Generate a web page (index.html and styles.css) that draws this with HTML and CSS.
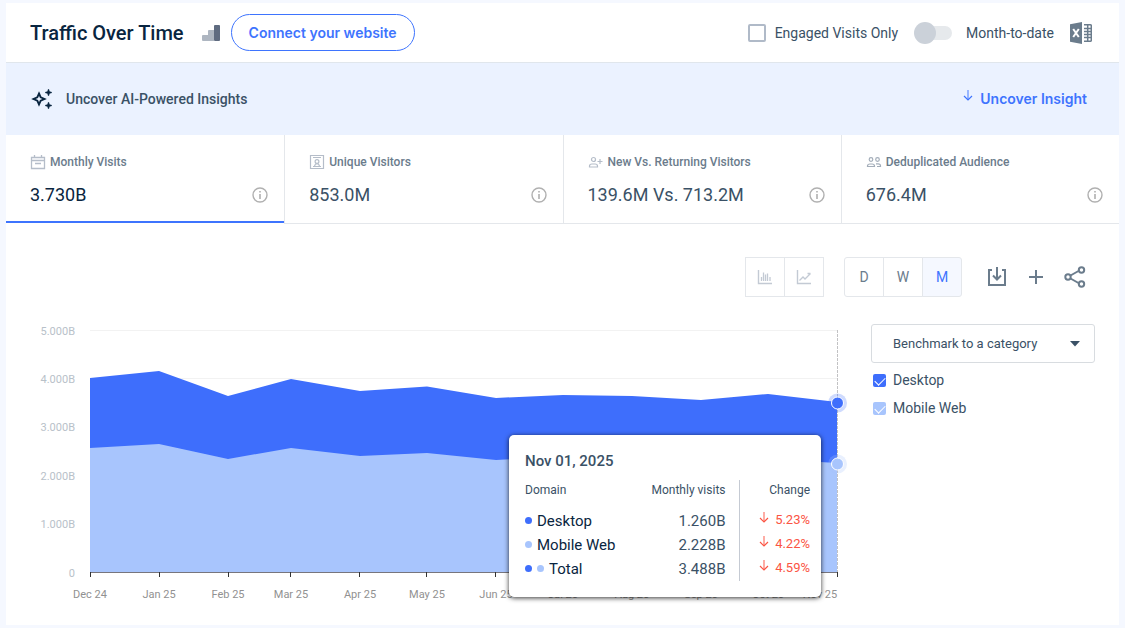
FILE: index.html
```
<!DOCTYPE html>
<html lang="en">
<head>
  <meta charset="UTF-8" />
  <title>Traffic Over Time</title>
  <meta name="viewport" content="width=device-width, initial-scale=1.0" />
  <link rel="stylesheet" href="styles.css">
</head>
<body>
  <svg class="defs" aria-hidden="true">
    <symbol id="info" viewBox="0 0 16 16">
      <circle cx="8" cy="8" r="7" fill="none" stroke="#b0b0b0" stroke-width="1.4" />
      <path d="M7.2 4h1.6v1.6H7.2zM7.2 7h1.6v5H7.2z" fill="#b0b0b0" />
    </symbol>
    <symbol id="down" viewBox="0 0 10 12">
      <path d="M5 0v9" fill="none" stroke="currentColor" stroke-width="1.6" opacity=".6" />
      <path d="M1 6l4 4 4-4" fill="none" stroke="currentColor" stroke-width="1.2" />
    </symbol>
  </svg>

  <main class="card">
    <header class="header">
      <h1>Traffic Over Time</h1>
      <svg class="bars-icon" width="18" height="16" viewBox="0 0 18 16">
        <path d="M1 10h5V6q0-1 1-1h5v11H1q-1 0-1-1v-4q0-1 1-1z" fill="#aeb6c1" />
        <rect x="12" width="6" height="16" rx="1" fill="#5f6b80" />
      </svg>
      <button class="connect">Connect your website</button>

      <div class="options">
        <label class="engaged"><input type="checkbox" />Engaged Visits Only</label>
        <label class="mtd"><input type="checkbox" role="switch" />Month-to-date</label>
        <button class="excel" aria-label="Download Excel">
          <svg width="22" height="22" viewBox="0 0 22 22">
            <path d="M0 2.2L12 0v22L0 19.8z" fill="#6b7c8c" />
            <path d="M3.2 7l5.6 8M8.8 7l-5.6 8" stroke="#fff" stroke-width="2" />
            <path d="M14 2.7h6.3q1 0 1 1v14.6q0 1-1 1H14M14 6.5h7M14 9.5h7M14 12.5h7M14 15.5h7M17.7 3v16" fill="none" stroke="#6b7c8c" stroke-width="1.5" />
          </svg>
        </button>
      </div>
    </header>

    <section class="insights">
      <svg width="22" height="22" viewBox="0 0 22 22" fill="#092540">
        <path d="M8 5.5l1.7 3.8L13.5 11l-3.8 1.7L8 16.5l-1.7-3.8L2.5 11l3.8-1.7z" fill="none" stroke="#092540" stroke-width="1.9" />
        <path d="M17.5 1l1 2.5 2.5 1-2.5 1-1 2.5-1-2.5-2.5-1 2.5-1zM17.5 14l1 2.5 2.5 1-2.5 1-1 2.5-1-2.5-2.5-1 2.5-1z" stroke="#092540" stroke-width=".5" />
      </svg>
      <span>Uncover AI-Powered Insights</span>
      <button class="uncover"><svg width="10" height="12"><use href="#down" /></svg>Uncover Insight</button>
    </section>

    <nav class="tabs">
      <button class="tab active">
        <span class="tab-name">
          <svg width="16" height="16" viewBox="0 0 16 16" fill="none" stroke="#b5bdc9">
            <path d="M1.500 3.500h13v11h-13zM1 6.500h14M4.500 1v3M11.500 1v3M5 9.500h6" stroke-width="1.3" />
          </svg>Monthly Visits</span>
        <span class="tab-value">3.730B<svg width="16" height="16"><use href="#info" /></svg></span>
      </button>
      <button class="tab">
        <span class="tab-name">
          <svg width="16" height="16" viewBox="0 0 16 16" fill="none" stroke="#b5bdc9" stroke-width="1.2">
            <path d="M1.500 1.500h13v13h-13zM4 12.500h8M5.500 12l1-2h3l1 2" />
            <path d="M4 3.500h8" stroke-width="1" />
            <circle cx="8" cy="7.500" r="1.900" />
          </svg>Unique Visitors</span>
        <span class="tab-value">853.0M<svg width="16" height="16"><use href="#info" /></svg></span>
      </button>
      <button class="tab">
        <span class="tab-name">
          <svg width="16" height="16" viewBox="0 0 16 16" fill="none" stroke="#b5bdc9" stroke-width="1.2">
            <circle cx="5.500" cy="5.500" r="2" />
            <path d="M1.500 13v-1q0-2 2.500-2h3q2.500 0 2.500 2v1zM12 5v5M9.500 7.500h5" />
          </svg>New Vs. Returning Visitors</span>
        <span class="tab-value">139.6M Vs. 713.2M<svg width="16" height="16"><use href="#info" /></svg></span>
      </button>
      <button class="tab">
        <span class="tab-name">
          <svg width="16" height="16" viewBox="0 0 16 16" fill="none" stroke="#a3adb9" stroke-width="1.2">
            <circle cx="5" cy="5.500" r="1.800" />
            <circle cx="11.500" cy="5.500" r="1.800" />
            <path d="M1.500 12.500v-.5q0-2 2.500-2h2q2.500 0 2.500 2v.5zM10 9.800h2q2.500 0 2.500 2v.7H11" />
          </svg>Deduplicated Audience</span>
        <span class="tab-value">676.4M<svg width="16" height="16"><use href="#info" /></svg></span>
      </button>
    </nav>

    <section class="panel">
      <div class="toolbar">
        <div class="group types">
          <button aria-label="Column chart">
            <svg width="16" height="16" viewBox="0 0 16 16" fill="none" stroke="#c3cad4">
              <path d="M1.500 1v13.500H15" stroke-width="1.4" />
              <path d="M4.500 12V8M6.500 12V3.500M8.500 12V5.500M10.500 12V4.500M13 12V8" stroke-width="1.3" />
            </svg>
          </button>
          <button aria-label="Line chart">
            <svg width="16" height="16" viewBox="0 0 16 16" fill="none" stroke="#c3cad4">
              <path d="M1.500 1v13.500H15" stroke-width="1.4" />
              <path d="M3.500 11.500L7 8l2 2 5.500-5.500M11.500 4.500h3" stroke-width="1.3" />
            </svg>
          </button>
        </div>
        <div class="group periods">
          <button>D</button>
          <button>W</button>
          <button class="selected">M</button>
        </div>
        <div class="actions">
          <button aria-label="Download">
            <svg width="22" height="22" viewBox="0 0 22 22" fill="none" stroke="#6b7c8c" stroke-width="2">
              <path d="M6 4H3v15h16V4h-3M11 1v12M7 9.500l4 4 4-4" />
            </svg>
          </button>
          <button aria-label="Add">
            <svg width="16" height="16" viewBox="0 0 16 16" stroke="#6b7c8c" stroke-width="2">
              <path d="M8 1v14M1 8h14" />
            </svg>
          </button>
          <button aria-label="Share">
            <svg width="22" height="22" viewBox="0 0 22 22" fill="none" stroke="#6b7c8c" stroke-width="2">
              <path d="M6.500 9.500l8-4.500M6.500 12.500l8 4.500" />
              <circle cx="4" cy="11" r="2.700" />
              <circle cx="17.500" cy="4" r="2.700" />
              <circle cx="17.500" cy="18" r="2.700" />
            </svg>
          </button>
        </div>
      </div>

      <div class="content">
        <div class="chart">
          <svg class="plot" viewBox="0 0 822 290">
            <g class="grid">
              <path d="M60 10.500H807M60 58.500H807M60 107.500H807M60 155.500H807M60 204.500H807" />
            </g>
            <g class="y-axis">
              <text x="45" y="15">5.000B</text>
              <text x="45" y="63">4.000B</text>
              <text x="45" y="111">3.000B</text>
              <text x="45" y="160">2.000B</text>
              <text x="45" y="208">1.000B</text>
              <text x="45" y="257">0</text>
            </g>
            <path class="desktop" d="M60 58L129 51 198 76 261 59 330 71 397 66.500 466 78 533 75 602 76 671 80 738 74 807 82V252H60z" />
            <path class="mobile" d="M60 128L129 124 198 139 261 128 330 136 397 133 466 140 533 137 602 138 671 142 738 139 807 143V252H60z" />
            <path class="axis" d="M60 252.500H808" />
            <path class="ticks" d="M60.500 252v5M129.500 252v5M198.500 252v5M260.500 252v5M329.500 252v5M396.500 252v5M465.500 252v5M532.500 252v5M601.500 252v5M670.500 252v5M737.500 252v5M807.500 252v5" />
            <g class="x-axis">
              <text x="60" y="278">Dec 24</text>
              <text x="129" y="278">Jan 25</text>
              <text x="198" y="278">Feb 25</text>
              <text x="261" y="278">Mar 25</text>
              <text x="330" y="278">Apr 25</text>
              <text x="397" y="278">May 25</text>
              <text x="466" y="278">Jun 25</text>
              <text x="533" y="278">Jul 25</text>
              <text x="602" y="278">Aug 25</text>
              <text x="671" y="278">Sep 25</text>
              <text x="738" y="278">Oct 25</text>
              <text x="790" y="278">Nov 25</text>
            </g>
            <path class="crosshair" d="M807.500 10V252" />
            <circle class="halo desktop" cx="807.500" cy="83" r="9.500" />
            <circle class="dot desktop" cx="807.500" cy="83" r="6" />
            <circle class="halo mobile" cx="807.500" cy="144" r="9.500" />
            <circle class="dot mobile" cx="807.500" cy="144" r="6" />
          </svg>

          <div class="tooltip">
            <h2>Nov 01, 2025</h2>
            <table>
              <thead>
                <tr><th>Domain</th><th>Monthly visits</th><th>Change</th></tr>
              </thead>
              <tbody>
                <tr>
                  <td><i class="bullet"></i>Desktop</td>
                  <td>1.260B</td>
                  <td><svg width="10" height="12"><use href="#down" /></svg>5.23%</td>
                </tr>
                <tr>
                  <td><i class="bullet light"></i>Mobile Web</td>
                  <td>2.228B</td>
                  <td><svg width="10" height="12"><use href="#down" /></svg>4.22%</td>
                </tr>
                <tr>
                  <td><i class="bullet"></i><i class="bullet light"></i>Total</td>
                  <td>3.488B</td>
                  <td><svg width="10" height="12"><use href="#down" /></svg>4.59%</td>
                </tr>
              </tbody>
            </table>
          </div>
        </div>

        <aside class="side">
          <div class="benchmark">
            <select aria-label="Benchmark to a category">
              <option>Benchmark to a category</option>
            </select>
            <svg width="10" height="6" viewBox="0 0 10 6"><path d="M0 0h10L5 5.500z" fill="#3a5166" /></svg>
          </div>
          <label class="legend"><input type="checkbox" checked />Desktop</label>
          <label class="legend light"><input type="checkbox" checked />Mobile Web</label>
        </aside>
      </div>
    </section>
  </main>
</body>
</html>
```
FILE: styles.css
```
* { box-sizing: border-box; }

body {
  margin: 0;
  padding: 3px 6px;
  background: #f5f8ff;
  color: #3a5166;
  font-family: Roboto, "Liberation Sans", sans-serif;
  font-size: 14px;
}

button, select, input { font: inherit; color: inherit; margin: 0; }

button {
  padding: 0;
  border: none;
  background: none;
  cursor: pointer;
}

svg { display: block; flex: none; }

.defs { position: absolute; width: 0; height: 0; }

.card { background: #fff; }

.header {
  display: flex;
  align-items: center;
  height: 60px;
  padding: 0 27px 0 24px;
  border-bottom: 1px solid #e0e6ec;
}

h1 {
  margin: 0;
  color: #092540;
  font-size: 20px;
  font-weight: 500;
}

.bars-icon { margin: 0 11px 0 18px; }

.connect {
  height: 37px;
  padding: 0 17px;
  border: 1px solid #3e74fe;
  border-radius: 19px;
  color: #3e74fe;
  font-family: Inter, sans-serif;
  font-weight: 600;
}

.options {
  display: flex;
  align-items: center;
  gap: 16px;
  margin-left: auto;
}

.options label { display: flex; align-items: center; }

.engaged { gap: 9px; }

.engaged input {
  appearance: none;
  width: 18px;
  height: 18px;
  border: 2px solid #b0bac8;
  border-radius: 2px;
}

.mtd { gap: 14px; }

.mtd input {
  appearance: none;
  position: relative;
  width: 38px;
  height: 22px;
}

.mtd input::before {
  content: "";
  position: absolute;
  inset: 4px 0 4px 8px;
  border-radius: 7px;
  background: #e6e9ec;
}

.mtd input::after {
  content: "";
  position: absolute;
  top: 0;
  left: 0;
  width: 22px;
  height: 22px;
  border-radius: 50%;
  background: #cbd1d9;
}

.insights {
  display: flex;
  align-items: center;
  gap: 13px;
  height: 72px;
  padding: 0 32px 0 25px;
  background: #ebf2ff;
  font-weight: 500;
}

.uncover {
  display: flex;
  gap: 7px;
  margin-left: auto;
  padding-bottom: 2px;
  color: #3e74fe;
  font-family: Inter, sans-serif;
  font-weight: 600;
}

.tabs {
  display: grid;
  grid-template-columns: repeat(4, 1fr);
}

.tab {
  display: flex;
  flex-direction: column;
  gap: 13px;
  height: 89px;
  padding: 18px 16px 0 24px;
  border-bottom: 1px solid #e4e7eb;
  text-align: left;
}

.tab + .tab { border-left: 1px solid #e4e7eb; }

.tab.active {
  border-bottom-color: #fff;
  box-shadow: inset 0 -2px #3e74fe;
}

.tab-name {
  display: flex;
  align-items: center;
  gap: 4px;
  height: 18px;
  color: #6b7c8c;
  font-size: 12px;
  font-weight: 500;
}

.tab-value {
  display: flex;
  align-items: center;
  justify-content: space-between;
  width: 100%;
  font-size: 18px;
}

.tab.active .tab-value { color: #092540; }

.panel { padding: 33px 24px 15px; }

.toolbar {
  display: flex;
  justify-content: flex-end;
  margin-bottom: 23px;
}

.group { display: flex; }

.group button {
  display: flex;
  align-items: center;
  justify-content: center;
  width: 40px;
  height: 40px;
  border: 1px solid #e4e7eb;
  color: #6b7c8c;
}

.group button + button { margin-left: -1px; }

.types { margin-right: 20px; }

.periods button:first-child { border-radius: 3px 0 0 3px; }
.periods button:last-child { border-radius: 0 3px 3px 0; }

.group .selected {
  background: #f5f8ff;
  color: #3e74fe;
}

.actions {
  display: flex;
  gap: 1px;
  margin: 0 1px 0 16px;
}

.actions button {
  display: flex;
  align-items: center;
  justify-content: center;
  width: 38px;
  height: 40px;
}

.content {
  display: flex;
  align-items: flex-start;
  gap: 19px;
}

.chart {
  position: relative;
  flex: 1;
  min-width: 0;
}

.plot { width: 100%; height: auto; font-size: 11px; }

.grid { stroke: #f2f2f2; }
.y-axis { fill: #b8c1c9; text-anchor: end; }
.x-axis { fill: #919191; text-anchor: middle; }
.desktop { fill: #3e6efc; }
.mobile { fill: #a8c5fd; }
.axis { stroke: #77757d; }
.ticks { stroke: #333; }

.crosshair {
  stroke: #c2c2c4;
  stroke-dasharray: 3 1;
}

.halo { opacity: .25; }
.dot { stroke: #fff; }

.tooltip {
  position: absolute;
  top: 115px;
  right: 31px;
  width: 312px;
  height: 162px;
  padding: 16px 11px 0 16px;
  border-radius: 5px;
  background: #fff;
  box-shadow: 0 1px 5px rgba(0, 0, 0, .8);
}

.tooltip h2 {
  margin: 0 0 9px;
  font-size: 15px;
  line-height: 20px;
  font-weight: 500;
}

.tooltip table {
  width: 100%;
  border-collapse: collapse;
}

.tooltip th {
  height: 29px;
  padding: 0 0 9px;
  font-size: 12px;
  font-weight: 400;
  text-align: right;
}

.tooltip td {
  height: 24px;
  padding: 0;
  font-size: 15px;
  text-align: right;
}

.tooltip th:first-child, .tooltip td:first-child { text-align: left; }
.tooltip td:first-child { color: #092540; }

.tooltip th:nth-child(2), .tooltip td:nth-child(2) {
  padding-right: 13px;
  border-right: 1px solid #c5cad3;
}

.tooltip th:last-child { width: 71px; }

.tooltip td:last-child {
  padding-bottom: 3px;
  color: #fb5443;
  font-size: 13px;
}

.tooltip td svg { display: inline-block; margin-right: 6px; }

.bullet {
  display: inline-block;
  width: 7px;
  height: 7px;
  margin-right: 5px;
  border-radius: 50%;
  background: #3e6efc;
  vertical-align: 2px;
}

.bullet.light { background: #a8c5fd; }

.side {
  display: flex;
  flex-direction: column;
  width: 224px;
  padding-top: 4px;
}

.benchmark { position: relative; margin-bottom: 3px; }

.benchmark select {
  appearance: none;
  width: 100%;
  height: 39px;
  padding: 0 21px;
  border: 1px solid #d8dce0;
  border-radius: 3px;
  background: #fff;
  font-size: 13px;
}

.benchmark svg {
  position: absolute;
  top: 17px;
  right: 15px;
  pointer-events: none;
}

.legend {
  display: flex;
  align-items: center;
  gap: 7px;
  height: 28px;
  padding-left: 2px;
}

.legend input {
  appearance: none;
  position: relative;
  width: 13px;
  height: 13px;
  border-radius: 2px;
  background: #3e6efc;
}

.legend.light input { background: #a8c5fd; }

.legend input:checked::after {
  content: "";
  position: absolute;
  top: 3px;
  left: 2px;
  width: 9px;
  height: 5px;
  border: solid #fff;
  border-width: 0 0 1px 1px;
  transform: rotate(-45deg);
}
```
